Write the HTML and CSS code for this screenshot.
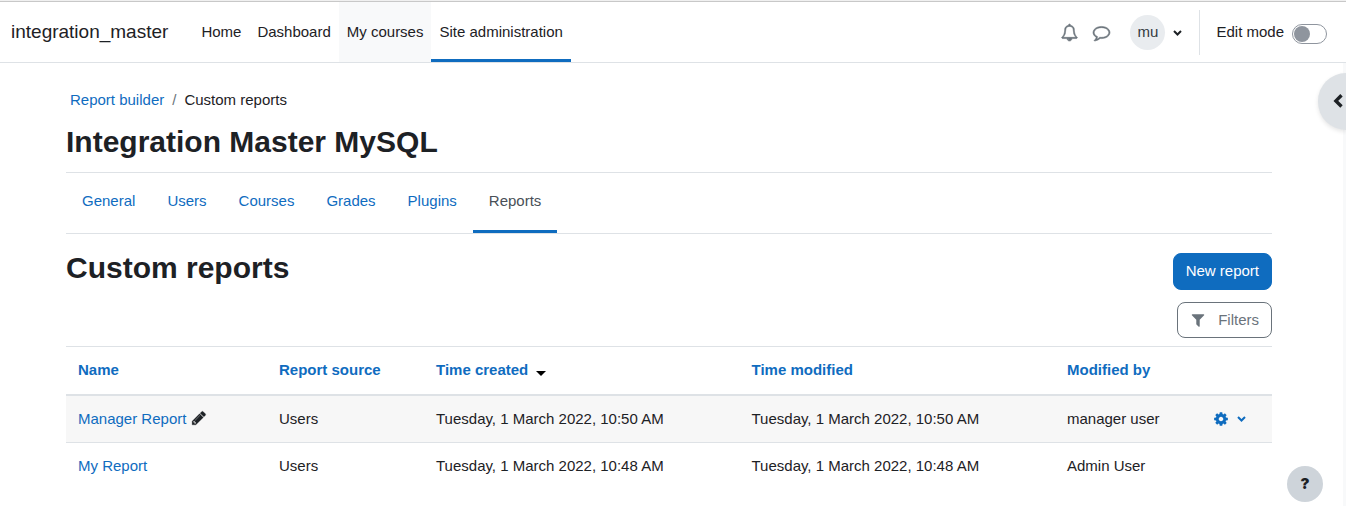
FILE: index.html
```
<!DOCTYPE html>
<html lang="en">
<head>
    <meta charset="UTF-8">
    <meta name="viewport" content="width=device-width, initial-scale=1.0">
    <title>Custom reports</title>
    <link rel="stylesheet" href="styles.css">
</head>
<body>

    <header class="navbar">
        <a class="brand" href="#">integration_master</a>
        <nav class="primary-nav">
            <a href="#">Home</a>
            <a href="#">Dashboard</a>
            <a class="hovered" href="#">My courses</a>
            <a class="active" href="#">Site administration</a>
        </nav>

        <div class="user-nav">
            <button class="icon-btn" aria-label="Notifications">
                <svg class="icon icon-lg" viewBox="0 0 1792 1792"><path d="M912 1696q0-16-16-16-59 0-101.5-42.5t-42.5-101.5q0-16-16-16t-16 16q0 73 51.5 124.5t124.5 51.5q16 0 16-16zm-666-288h1300q-266-300-266-832 0-51-24-105t-69-103-121.5-80.5-169.5-31.5-169.5 31.5-121.5 80.5-69 103-24 105q0 532-266 832zm1482 0q0 52-38 90t-90 38h-448q0 106-75 181t-181 75-181-75-75-181h-448q-52 0-90-38t-38-90q50-42 91-88t85-119.5 74.5-158.5 50-206 19.5-260q0-152 117-282.5t307-158.5q-8-19-8-39 0-40 28-68t68-28 68 28 28 68q0 20-8 39 190 28 307 158.5t117 282.5q0 139 19.5 260t50 206 74.5 158.5 85 119.5 91 88z"/></svg>
            </button>
            <button class="icon-btn" aria-label="Messages">
                <svg class="icon icon-lg" viewBox="0 0 1792 1792"><path d="M896 384q-204 0-381.5 69.5t-282 187.5-104.5 255q0 112 71.5 213.5t201.5 175.5l87 50-27 96q-24 91-70 172 152-63 275-171l43-38 57 6q69 8 130 8 204 0 381.5-69.5t282-187.5 104.5-255-104.5-255-282-187.5-381.5-69.5zm896 512q0 174-120 321.5t-326 233-450 85.5q-70 0-145-8-198 175-460 242-49 14-114 22h-5q-15 0-27-10.5t-16-27.5v-1q-3-4-.5-12t2-10 4.5-9.5l6-9 7-8.5 8-9q7-8 31-34.5t34.5-38 31-39.5 32.5-51 27-59 26-76q-157-89-247.5-220t-90.5-281q0-174 120-321.5t326-233 450-85.5 450 85.5 326 233 120 321.5z"/></svg>
            </button>
            <button class="user-menu" aria-label="User menu">
                <span class="avatar">mu</span>
                <svg class="chevron" viewBox="0 0 9 7"><path d="M1 2l3.500 3.500L8 2"/></svg>
            </button>
            <div class="edit-mode">
                <label for="edit-mode">Edit mode</label>
                <input type="checkbox" id="edit-mode" class="switch">
            </div>
        </div>
    </header>

    <main class="page">
        <nav class="breadcrumb" aria-label="Breadcrumb">
            <a href="#">Report builder</a>
            <span class="separator">/</span>
            <span>Custom reports</span>
        </nav>
        <h1>Integration Master MySQL</h1>

        <nav class="tabs">
            <a href="#">General</a>
            <a href="#">Users</a>
            <a href="#">Courses</a>
            <a href="#">Grades</a>
            <a href="#">Plugins</a>
            <a class="active" href="#">Reports</a>
        </nav>

        <div class="report-header">
            <h2>Custom reports</h2>
            <div class="actions">
                <button class="btn primary-btn">New report</button>
                <button class="btn outline-btn">
                    <svg class="icon" viewBox="0 0 1792 1792"><path d="M1595 295q17 41-14 70l-493 493v742q0 42-39 59-13 5-25 5-27 0-45-19l-256-256q-19-19-19-45v-486l-493-493q-31-29-14-70 17-39 59-39h1280q42 0 59 39z"/></svg>
                    Filters
                </button>
            </div>
        </div>

        <table class="report-table">
            <colgroup>
                <col class="col-name">
                <col class="col-source">
                <col class="col-time">
                <col class="col-time">
                <col class="col-user">
                <col class="col-menu">
            </colgroup>
            <thead>
                <tr>
                    <th><a href="#">Name</a></th>
                    <th><a href="#">Report source</a></th>
                    <th><a href="#">Time created</a><svg class="sort" viewBox="0 0 10 5"><path d="M0 0h10l-5 5z"/></svg></th>
                    <th><a href="#">Time modified</a></th>
                    <th><a href="#">Modified by</a></th>
                    <th></th>
                </tr>
            </thead>
            <tbody>
                <tr>
                    <td>
                        <a href="#">Manager Report</a>
                        <button class="edit-btn" aria-label="Edit name">
                            <svg class="icon" viewBox="0 0 1792 1792"><path d="M491 1536l91-91-235-235-91 91v107h128v128h107zm523-928q0-22-22-22-10 0-17 7l-542 542q-7 7-7 17 0 22 22 22 10 0 17-7l542-542q7-7 7-17zm-54-192l416 416-832 832h-416v-416zm683 96q0 53-37 90l-166 166-416-416 166-165q36-38 90-38 53 0 91 38l235 234q37 39 37 91z"/></svg>
                        </button>
                    </td>
                    <td>Users</td>
                    <td>Tuesday, 1 March 2022, 10:50 AM</td>
                    <td>Tuesday, 1 March 2022, 10:50 AM</td>
                    <td>manager user</td>
                    <td>
                        <button class="row-menu" aria-label="Actions">
                            <svg class="icon" viewBox="0 0 1792 1792"><path d="M1152 896q0-106-75-181t-181-75-181 75-75 181 75 181 181 75 181-75 75-181zm512-109v222q0 12-8 23t-20 13l-185 28q-19 54-39 91 35 50 107 138 10 12 10 25t-9 23q-27 37-99 108t-94 71q-12 0-26-9l-138-108q-44 23-91 38-16 136-29 186-7 28-36 28h-222q-14 0-24.5-8.5t-11.500-21.500l-28-184q-49-16-90-37l-141 107q-10 9-25 9-14 0-25-11-126-114-165-168-7-10-7-23 0-12 8-23 15-21 51-66.500t54-70.500q-27-50-41-99l-183-27q-13-2-21-12.500t-8-23.500v-222q0-12 8-23t19-13l186-28q14-46 39-92-40-57-107-138-10-12-10-24 0-10 9-23 26-36 98.500-107.500t94.500-71.500q13 0 26 10l138 107q44-23 91-38 16-136 29-186 7-28 36-28h222q14 0 24.500 8.500t11.500 21.500l28 184q49 16 90 37l142-107q9-9 24-9 13 0 25 10 129 119 165 170 7 8 7 22 0 12-8 23-15 21-51 66.500t-54 70.500q26 50 41 98l183 28q13 2 21 12.500t8 23.500z"/></svg>
                            <svg class="chevron" viewBox="0 0 9 7"><path d="M1 1l3.500 3.500L8 1"/></svg>
                        </button>
                    </td>
                </tr>
                <tr>
                    <td><a href="#">My Report</a></td>
                    <td>Users</td>
                    <td>Tuesday, 1 March 2022, 10:48 AM</td>
                    <td>Tuesday, 1 March 2022, 10:48 AM</td>
                    <td>Admin User</td>
                    <td></td>
                </tr>
            </tbody>
        </table>
    </main>

    <button class="drawer-toggle" aria-label="Open block drawer">
        <svg viewBox="0 0 12 16"><path d="M10 2L5 7l5 5"/></svg>
    </button>
    <button class="help-btn" aria-label="Help">?</button>

</body>
</html>
```
FILE: styles.css
```
:root {
    --primary-color: #0f6cbf;
    --text-color: #1d2125;
    --muted-color: #6a737b;
    --border-color: #dee2e6;
}

* {
    box-sizing: border-box;
}

body {
    margin: 0;
    font-family: "Liberation Sans", Arial, sans-serif;
    font-size: 15px;
    line-height: 22px;
    color: var(--text-color);
    background: white;
}

a {
    color: var(--primary-color);
    text-decoration: none;
}

button {
    padding: 0;
    border: none;
    background: none;
    font: inherit;
    color: inherit;
    cursor: pointer;
}

.icon {
    width: 16px;
    height: 16px;
    fill: currentColor;
}

.icon-lg {
    width: 17px;
    height: 17px;
    stroke: currentColor;
    stroke-width: 60;
    overflow: visible;
}

.chevron {
    width: 9px;
    height: 7px;
    fill: none;
    stroke: currentColor;
    stroke-width: 2;
}

/* Top bar */
.navbar {
    display: flex;
    align-items: stretch;
    height: 63px;
    padding: 1px 19px 0 11px;
    border-top: 1px solid #f0f0f0;
    border-bottom: 1px solid var(--border-color);
    box-shadow: inset 0 1px #c8c8c8;
}

.navbar a {
    color: var(--text-color);
}

.brand {
    display: flex;
    align-items: center;
    margin-right: 25px;
    font-size: 19px;
}

.primary-nav {
    display: flex;
}

.primary-nav a {
    display: flex;
    align-items: center;
    padding: 0 8px;
    border-top: 3px solid transparent;
    border-bottom: 3px solid transparent;
}

.primary-nav .hovered {
    background: #f8f9fa;
}

.primary-nav .active {
    border-bottom-color: var(--primary-color);
}

.user-nav {
    display: flex;
    align-items: center;
    margin-left: auto;
}

.icon-btn {
    display: flex;
    padding: 0 8px 0 7px;
    color: var(--muted-color);
}

.user-menu {
    display: flex;
    align-items: center;
    gap: 8px;
    margin: 0 17px 0 12px;
}

.avatar {
    width: 35px;
    height: 35px;
    border-radius: 50%;
    line-height: 34px;
    text-align: center;
    background: #e9ecef;
    color: #343a40;
}

.edit-mode {
    display: flex;
    align-items: center;
    gap: 8px;
    height: 45px;
    padding-left: 16px;
    border-left: 1px solid var(--border-color);
}

.switch {
    appearance: none;
    width: 35px;
    height: 20px;
    margin: 3px 0 0;
    padding: 1px;
    border: 1px solid #8f959e;
    border-radius: 10px;
}

.switch::before {
    content: "";
    display: block;
    width: 16px;
    height: 16px;
    border-radius: 50%;
    background: #8f959e;
}

.switch:checked::before {
    margin-left: auto;
    background: var(--primary-color);
}

/* Page */
.page {
    min-height: calc(100vh - 63px);
    padding: 26px 71px 0 66px;
    border-right: 3px solid #f8f9fa;
}

.breadcrumb {
    display: flex;
    gap: 8px;
    padding: 0 4px;
}

.separator {
    color: var(--muted-color);
}

h1,
h2 {
    margin: 0;
    font-size: 30px;
    line-height: 36px;
}

h1 {
    margin: 13px 0 12px;
}

.tabs {
    display: flex;
    height: 62px;
    border-top: 1px solid var(--border-color);
    border-bottom: 1px solid var(--border-color);
}

.tabs a {
    display: flex;
    align-items: center;
    padding: 0 16px 2px;
    border-bottom: 3px solid transparent;
}

.tabs .active {
    border-bottom-color: var(--primary-color);
    color: #495057;
}

.report-header {
    display: flex;
    justify-content: space-between;
    padding: 16px 0 8px;
}

.actions {
    display: flex;
    flex-direction: column;
    align-items: flex-end;
    gap: 12px;
    padding-top: 3px;
}

.btn {
    display: flex;
    align-items: center;
    padding: 6px 12px;
    border: 1px solid;
    border-radius: 8px;
}

.primary-btn {
    padding-bottom: 7px;
    border-color: var(--primary-color);
    background: var(--primary-color);
    color: white;
}

.outline-btn {
    gap: 12px;
    border-color: var(--muted-color);
    color: var(--muted-color);
}

/* Reports table */
.report-table {
    width: 100%;
    table-layout: fixed;
    border-spacing: 0;
    border-top: 1px solid var(--border-color);
}

.col-name { width: 201px; }
.col-source { width: 157px; }
.col-user { width: 146px; }
.col-menu { width: 71px; }

.report-table th,
.report-table td {
    padding: 12px;
    text-align: left;
    white-space: nowrap;
}

.report-table th {
    padding-bottom: 13px;
    border-bottom: 2px solid var(--border-color);
}

.report-table td {
    border-bottom: 1px solid var(--border-color);
}

.report-table tbody tr:last-child td {
    border-bottom: none;
}

.report-table tbody tr:nth-child(odd) {
    background: #f7f7f7;
}

.sort {
    width: 10px;
    height: 5px;
    margin-left: 8px;
    vertical-align: -1px;
}

.edit-btn {
    vertical-align: -2px;
}

.edit-btn .icon {
    display: block;
    stroke: currentColor;
    stroke-width: 30;
}

.row-menu {
    display: flex;
    align-items: center;
    gap: 8px;
    color: var(--primary-color);
}

/* Floating buttons */
.drawer-toggle {
    position: absolute;
    top: 73px;
    right: 0;
    display: flex;
    align-items: center;
    width: 28px;
    height: 57px;
    padding-left: 12px;
    border-radius: 28px 0 0 28px;
    background: var(--border-color);
    box-shadow: 0 2px 4px rgba(0, 0, 0, 0.1);
}

.drawer-toggle svg {
    width: 14px;
    height: 18px;
    fill: none;
    stroke: currentColor;
    stroke-width: 3;
}

.help-btn {
    position: fixed;
    right: 23px;
    bottom: 4px;
    width: 36px;
    height: 36px;
    border-radius: 50%;
    font-family: Inter, sans-serif;
    font-weight: 900;
    background: #ced4da;
}
```
